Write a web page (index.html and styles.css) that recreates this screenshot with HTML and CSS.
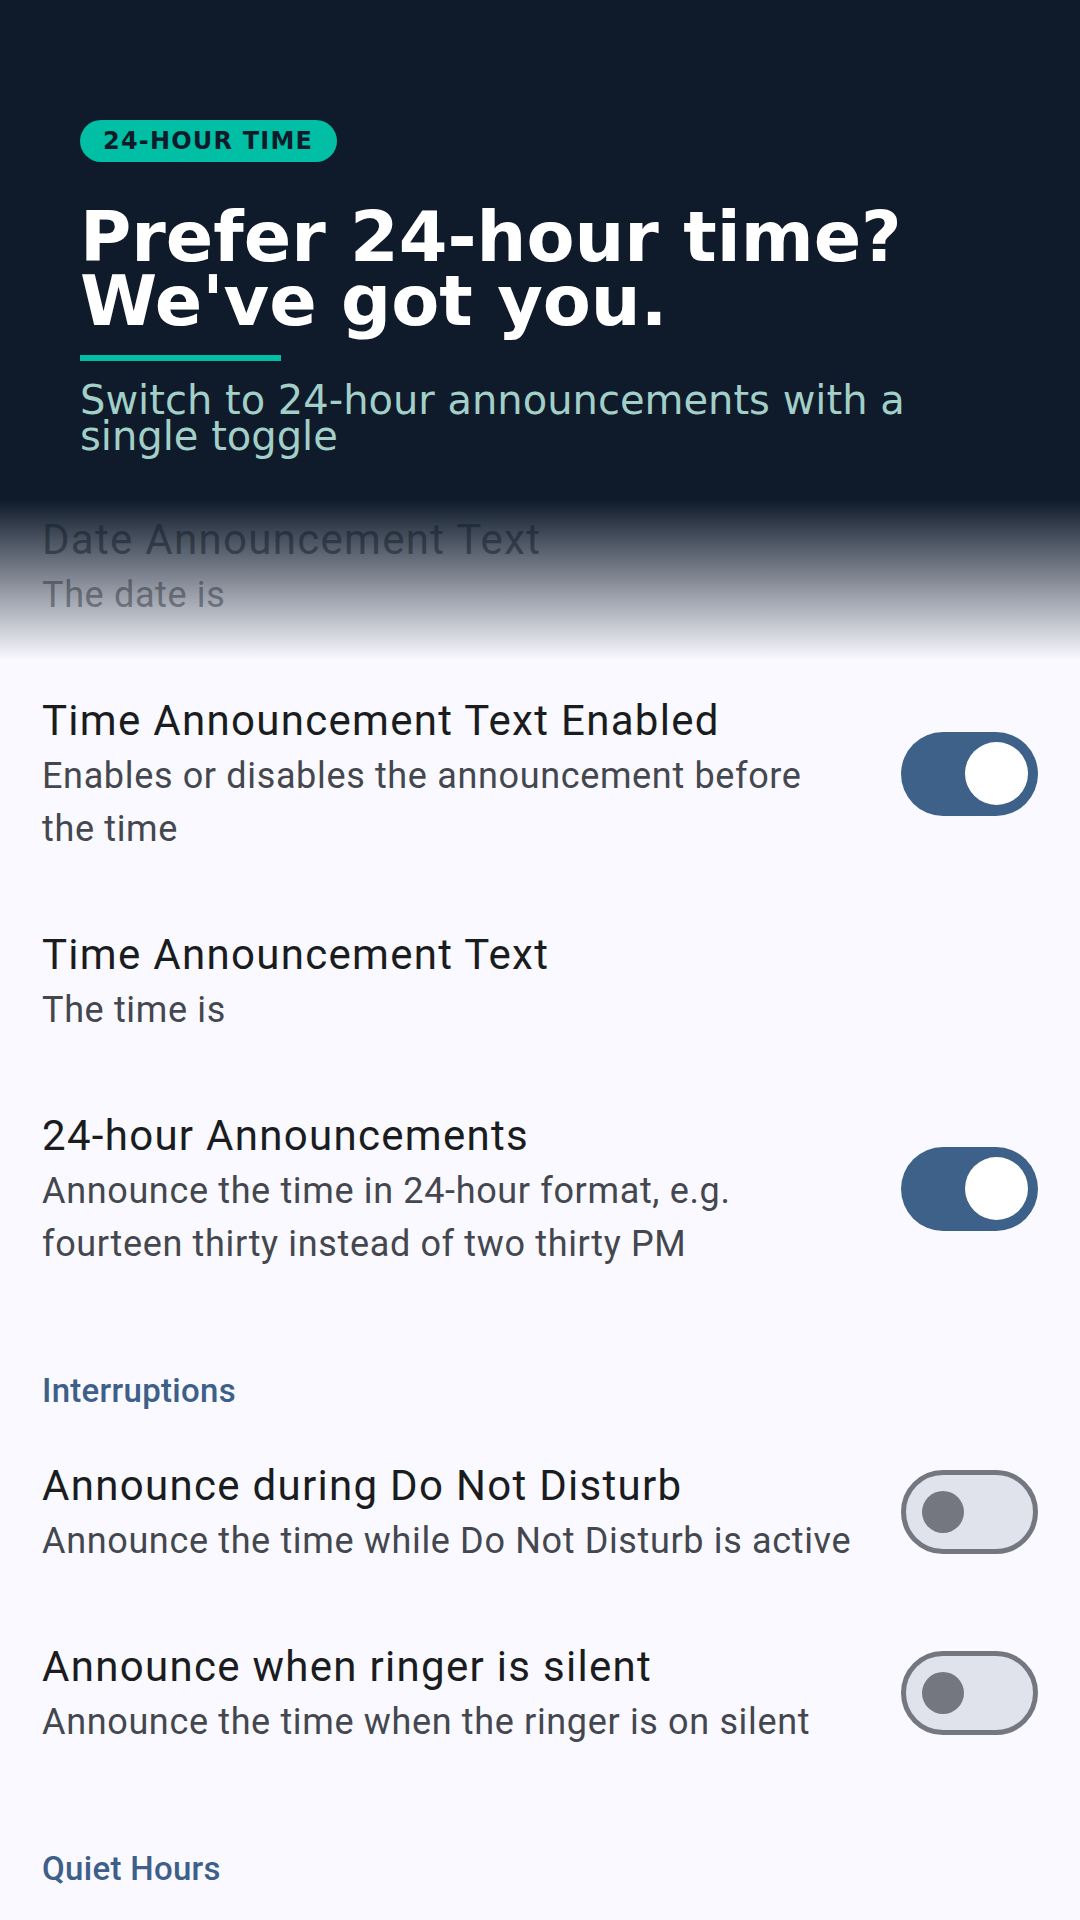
FILE: index.html
```html
<!DOCTYPE html>
<html lang="en">
<head>
<meta charset="UTF-8">
<meta name="viewport" content="width=device-width, initial-scale=1.0">
<title>Talking Clock Settings</title>
<link rel="stylesheet" href="styles.css">
</head>
<body>
    <div class="screen">
        <header class="hero">
            <span class="badge">24-HOUR TIME</span>
            <h1 class="hero-title">Prefer 24-hour time? We've got you.</h1>
            <div class="hero-rule"></div>
            <p class="hero-sub">Switch to 24-hour announcements with a single toggle</p>
            <div class="hero-fade"></div>
        </header>

        <main class="prefs">
            <!-- scrolled under the banner, so it sits in the fading edge -->
            <div class="pref faded">
                <div class="pref-text">
                    <div class="pref-title">Date Announcement Text</div>
                    <div class="pref-summary">The date is</div>
                </div>
            </div>

            <div class="pref">
                <div class="pref-text">
                    <div class="pref-title">Time Announcement Text Enabled</div>
                    <div class="pref-summary">Enables or disables the announcement before the time</div>
                </div>
                <div class="switch on"><span class="thumb"></span></div>
            </div>

            <div class="pref">
                <div class="pref-text">
                    <div class="pref-title">Time Announcement Text</div>
                    <div class="pref-summary">The time is</div>
                </div>
            </div>

            <div class="pref">
                <div class="pref-text">
                    <div class="pref-title">24-hour Announcements</div>
                    <div class="pref-summary">Announce the time in 24-hour format, e.g. fourteen thirty instead of two thirty PM</div>
                </div>
                <div class="switch on"><span class="thumb"></span></div>
            </div>

            <div class="pref-category">Interruptions</div>

            <div class="pref">
                <div class="pref-text">
                    <div class="pref-title">Announce during Do Not Disturb</div>
                    <div class="pref-summary">Announce the time while Do Not Disturb is active</div>
                </div>
                <div class="switch off"><span class="thumb"></span></div>
            </div>

            <div class="pref">
                <div class="pref-text">
                    <div class="pref-title">Announce when ringer is silent</div>
                    <div class="pref-summary">Announce the time when the ringer is on silent</div>
                </div>
                <div class="switch off"><span class="thumb"></span></div>
            </div>

            <div class="pref-category">Quiet Hours</div>
        </main>
    </div>
</body>
</html>
```

FILE: styles.css
```css
html, body {
    margin: 0;
    background-color: #f9f9ff;
}
body {
    overflow: hidden;
}
.screen {
    width: 1080px;
    height: 1920px;
    overflow: hidden;
}

/* header banner */
.hero {
    position: relative;
    z-index: 1;
    height: 475px;
    box-sizing: border-box;
    padding: 120px 80px 0;
    background-color: #0f1b2b;
    font-family: "DejaVu Sans", sans-serif;
}
.badge {
    display: inline-block;
    height: 42px;
    line-height: 42px;
    padding: 0 24px 0 23px;
    border-radius: 21px;
    background-color: #00bfa5;
    color: #0f1b2b;
    font-size: 24px;
    font-weight: 700;
    letter-spacing: 1.2px;
}
.hero-title {
    margin: 43px 0 0;
    color: #ffffff;
    font-size: 70px;
    line-height: 64px;
    font-weight: 700;
}
.hero-rule {
    width: 201px;
    height: 6px;
    margin-top: 22px;
    background-color: #00bfa5;
}
.hero-sub {
    margin: 21px 0 0;
    color: #a2cfc7;
    font-size: 40px;
    line-height: 36px;
}
.hero-fade {
    position: absolute;
    left: 0;
    right: 0;
    top: 100%;
    height: 185px;
    background: linear-gradient(to bottom, #0f1b2b 0, #0f1b2b 25px, rgba(249, 249, 255, 0) 185px);
}

/* preference list */
.prefs {
    font-family: Roboto, "Noto Sans", sans-serif;
}
.pref {
    display: flex;
    align-items: center;
    padding: 35px 42px 34px;
}
.pref.faded {
    opacity: 0.5;
}
.pref-text {
    flex: 1;
    min-width: 0;
}
.pref-title {
    color: #1a1c1e;
    font-size: 42px;
    line-height: 59px;
    letter-spacing: 1.3px;
}
.pref-summary {
    color: #44474e;
    font-size: 36px;
    line-height: 53px;
    letter-spacing: 0.65px;
}
.pref-category {
    padding: 64px 42px 8px;
    color: #3d5f88;
    font-size: 33px;
    line-height: 44px;
    font-weight: 500;
    letter-spacing: 0.3px;
}

/* switches */
.switch {
    flex: none;
    display: flex;
    align-items: center;
    box-sizing: border-box;
    width: 137px;
    height: 84px;
    margin-left: 42px;
    border-radius: 42px;
}
.switch .thumb {
    display: block;
    border-radius: 50%;
}
.switch.on {
    justify-content: flex-end;
    padding-right: 10px;
    background-color: #3d6188;
}
.switch.on .thumb {
    width: 63px;
    height: 63px;
    background-color: #ffffff;
}
.switch.off {
    padding-left: 16px;
    border: 5px solid #74777f;
    background-color: #e0e2ec;
}
.switch.off .thumb {
    width: 42px;
    height: 42px;
    background-color: #74777f;
}
```
